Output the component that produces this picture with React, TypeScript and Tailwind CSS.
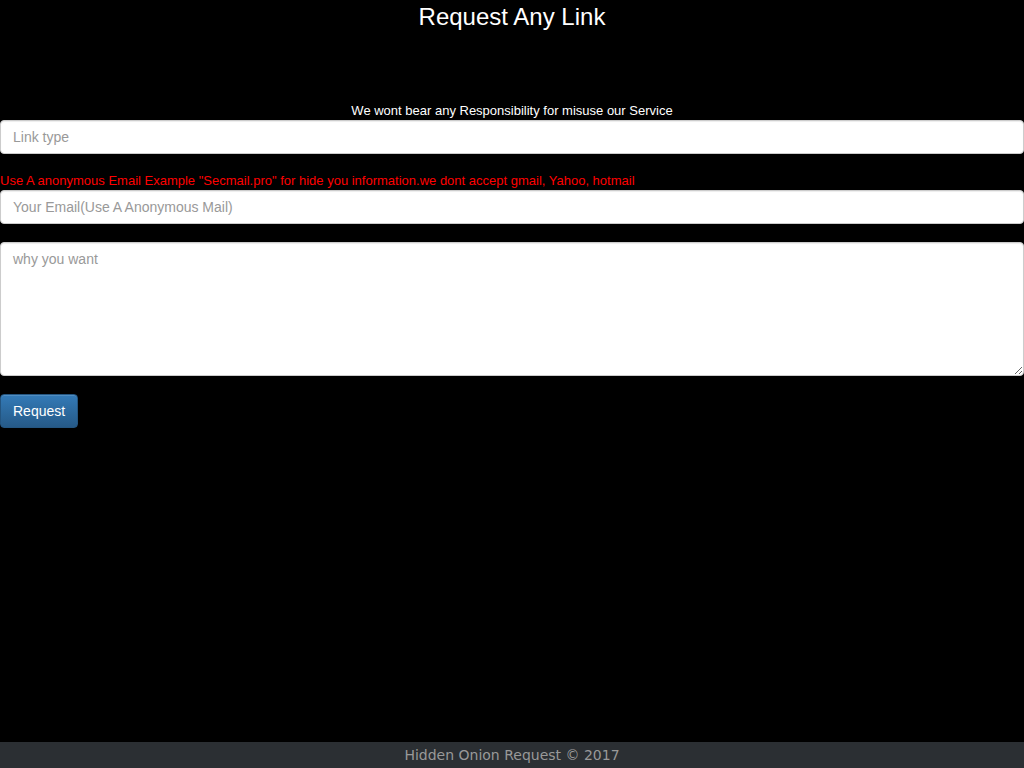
import React from 'react';

const inputCls =
  'block w-full h-[34px] px-3 py-1.5 text-[14px] text-[#555] bg-white border border-[#ccc] rounded-[4px] shadow-[inset_0_1px_1px_rgba(0,0,0,0.075)] placeholder:text-[#999] outline-none';

const App: React.FC = () => {
  return (
    <div className="min-h-screen bg-black flex flex-col font-['Liberation_Sans',Arial,sans-serif]">
      <div className="flex-1">
        <h3 className="text-center text-white text-[24px] leading-[32px] pt-px">Request Any Link</h3>

        <form className="mt-[69px]" onSubmit={(e) => e.preventDefault()}>
          <p className="text-center text-white text-[13px] leading-[18px]">
            We wont bear any Responsibility for misuse our Service
          </p>
          <input className={inputCls} placeholder="Link type" />

          <p className="mt-[18px] text-[#ff0000] text-[13px] leading-[18px]">
            Use A anonymous Email Example "Secmail.pro" for hide you information.we dont accept gmail, Yahoo, hotmail
          </p>
          <input className={inputCls} placeholder="Your Email(Use A Anonymous Mail)" />

          <textarea
            className="block w-full h-[134px] mt-[18px] px-3 py-1.5 text-[14px] leading-[20px] text-[#555] bg-white border border-[#ccc] rounded-[4px] shadow-[inset_0_1px_1px_rgba(0,0,0,0.075)] placeholder:text-[#999] outline-none"
            placeholder="why you want"
          />

          <button
            type="submit"
            className="mt-[18px] h-[34px] px-3 text-[14px] text-white rounded-[4px] border border-[#245580] bg-[linear-gradient(to_bottom,#337ab7_0,#265a88_100%)] shadow-[inset_0_1px_0_rgba(255,255,255,0.15),0_1px_1px_rgba(0,0,0,0.075)]"
          >
            Request
          </button>
        </form>
      </div>

      <footer className="h-[26px] bg-[#2b2f33] flex items-center justify-center text-[#999] text-[14px] font-['DejaVu_Sans',sans-serif]">
        Hidden Onion Request © 2017
      </footer>
    </div>
  );
};

export default App;
